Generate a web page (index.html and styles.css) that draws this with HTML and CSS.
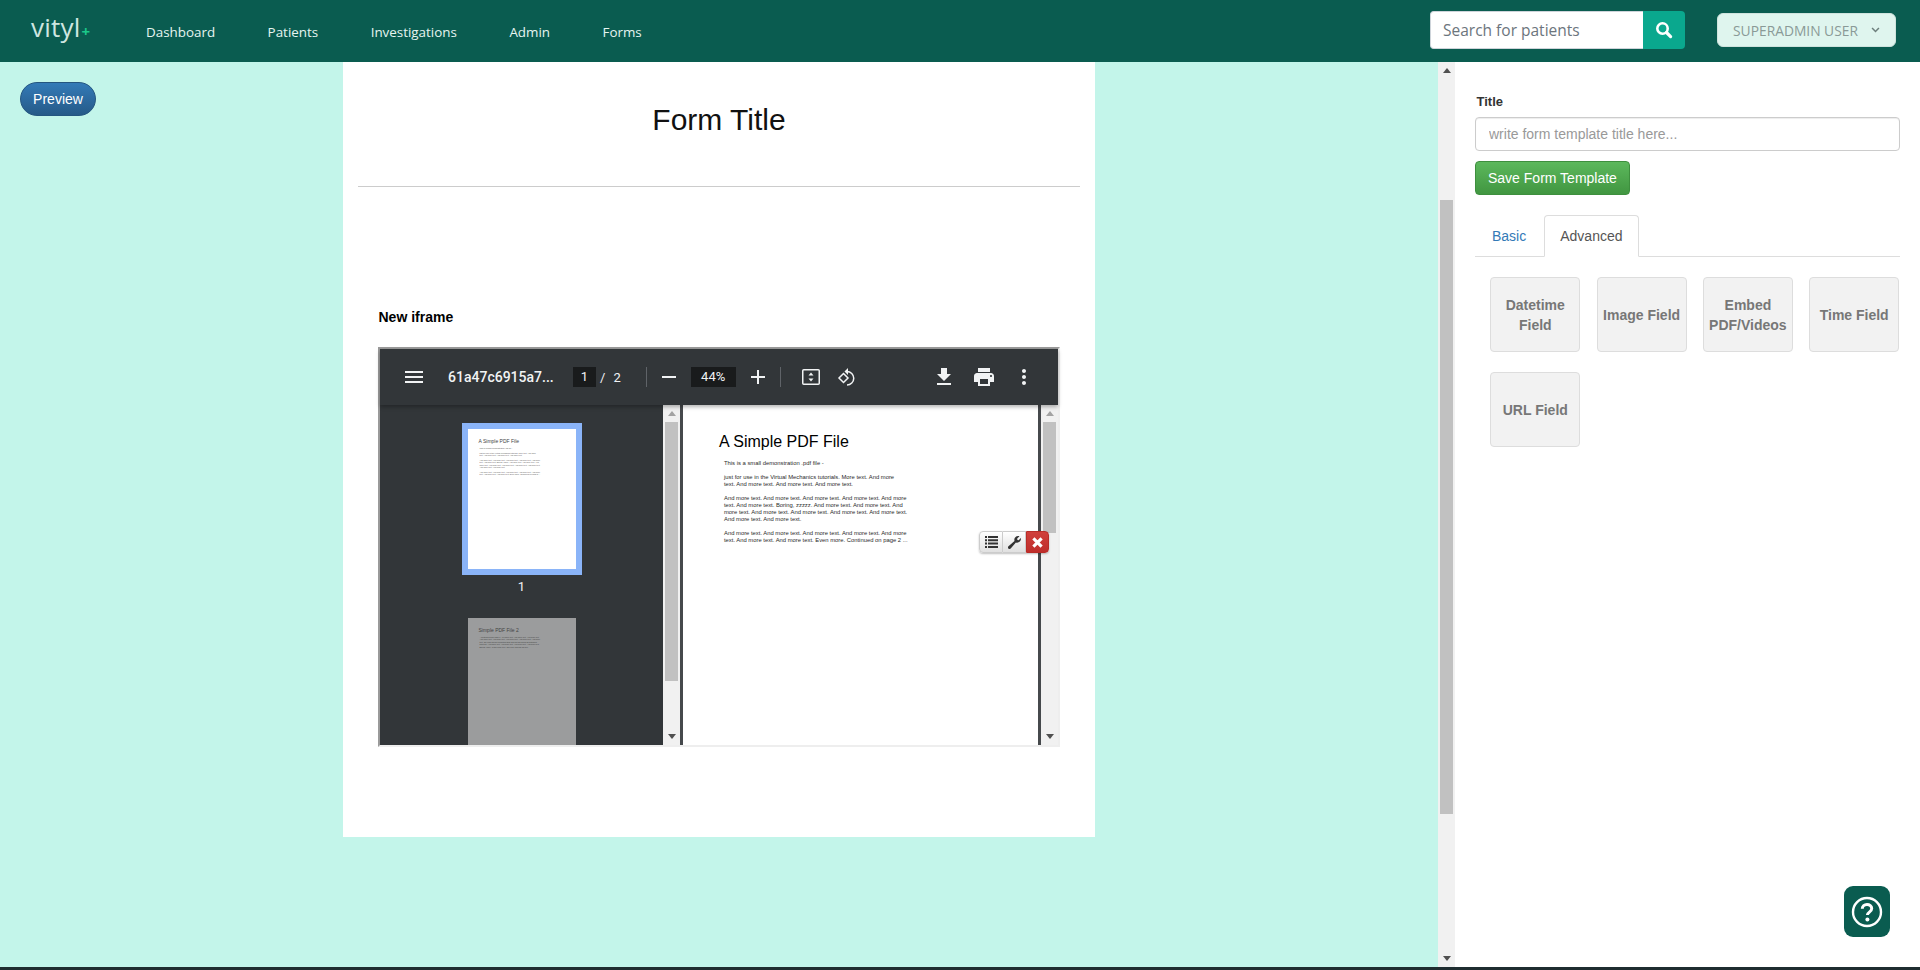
FILE: index.html
```html
<!DOCTYPE html>
<html lang="en">

<head>
    <meta charset="UTF-8">
    <title>Form Template</title>
    <link rel="stylesheet" href="styles.css">
</head>

<body>
    <header class="topbar">
        <a class="logo" href="#">vityl<span class="logo-plus">+</span></a>
        <nav class="nav">
            <a href="#">Dashboard</a>
            <a href="#">Patients</a>
            <a href="#">Investigations</a>
            <a href="#">Admin</a>
            <a href="#">Forms</a>
        </nav>
        <form class="search">
            <input class="search-input" type="text" placeholder="Search for patients">
            <button class="search-btn" type="button">
                <svg width="18" height="18" viewBox="0 0 18 18" fill="none" stroke="#fff">
                    <circle cx="7.5" cy="7.5" r="5.2" stroke-width="2.6" />
                    <path d="M11.5 11.5L15.6 15.6" stroke-width="3.2" stroke-linecap="round" />
                </svg>
            </button>
        </form>
        <button class="user-btn" type="button">
            SUPERADMIN USER
            <svg width="9" height="6" viewBox="0 0 10 7" fill="none" stroke="#6d7f7c" stroke-width="1.8">
                <path d="M1 1.2L5 5.2L9 1.2" />
            </svg>
        </button>
    </header>

    <main class="main">
        <div class="left-col">
            <button class="preview-btn" type="button">Preview</button>
        </div>

        <section class="sheet">
            <h1 class="sheet-title">Form Title</h1>
            <hr class="sheet-rule">
            <div class="field">
                <label class="field-label">New iframe</label>
                <div class="viewer">
                    <div class="viewer-bar">
                        <svg class="ico" viewBox="0 0 24 24">
                            <path d="M3 18h18v-2H3v2zm0-5h18v-2H3v2zm0-7v2h18V6H3z" />
                        </svg>
                        <span class="doc-name">61a47c6915a7...</span>
                        <span class="page-box">1</span>
                        <span class="page-sep">/</span>
                        <span class="page-total">2</span>
                        <span class="bar-sep bar-sep-first"></span>
                        <svg class="ico" viewBox="0 0 24 24">
                            <path d="M19 13H5v-2h14v2z" />
                        </svg>
                        <span class="zoom-box">44%</span>
                        <svg class="ico" viewBox="0 0 24 24">
                            <path d="M19 13h-6v6h-2v-6H5v-2h6V5h2v6h6v2z" />
                        </svg>
                        <span class="bar-sep"></span>
                        <svg class="ico ico-fit" viewBox="0 0 24 24">
                            <rect class="ico-line" x="3.750" y="4.750" width="16.500" height="14.500" rx="1" />
                            <path d="M12 7.500L14.500 10.500H9.500zM12 16.500L9.500 13.500H14.500z" />
                        </svg>
                        <svg class="ico ico-rotate" viewBox="0 0 24 24">
                            <path class="ico-line" d="M8.500 8.500L13 13L8.500 17.500L4 13z" />
                            <path class="ico-line" d="M12 6.500a6.700 6.700 0 0 1 0 13.500" />
                            <path d="M13 3L9.500 6.500L13 10z" />
                        </svg>
                        <div class="bar-right">
                            <svg class="ico" viewBox="0 0 24 24">
                                <path d="M19 9h-4V3H9v6H5l7 7 7-7zM5 18v2h14v-2H5z" />
                            </svg>
                            <svg class="ico" viewBox="0 0 24 24">
                                <path d="M19 8H5c-1.660 0-3 1.340-3 3v6h4v4h12v-4h4v-6c0-1.660-1.340-3-3-3zm-3 11H8v-5h8v5zm3-7c-.55 0-1-.45-1-1s.45-1 1-1 1 .45 1 1-.45 1-1 1zm-1-9H6v4h12V3z" />
                            </svg>
                            <svg class="ico" viewBox="0 0 24 24">
                                <path d="M12 8c1.100 0 2-.9 2-2s-.9-2-2-2-2 .9-2 2 .9 2 2 2zm0 2c-1.100 0-2 .9-2 2s.9 2 2 2 2-.9 2-2-.9-2-2-2zm0 6c-1.100 0-2 .9-2 2s.9 2 2 2 2-.9 2-2-.9-2-2-2z" />
                            </svg>
                        </div>
                    </div>
                    <div class="viewer-body">
                        <aside class="thumbs">
                            <div class="thumb thumb-active">
                                <div class="doc doc-small">
                                    <div class="doc-title">A Simple PDF File</div>
                                    <div class="doc-text">
                                        <p>This is a small demonstration .pdf file -</p>
                                        <p>just for use in the Virtual Mechanics tutorials. More text. And more<br>text. And more text. And more text. And more text.</p>
                                        <p>And more text. And more text. And more text. And more text. And more<br>text. And more text. Boring, zzzzz. And more text. And more text. And<br>more text. And more text. And more text. And more text. And more text.<br>And more text. And more text.</p>
                                        <p>And more text. And more text. And more text. And more text. And more<br>text. And more text. And more text. Even more. Continued on page 2 ...</p>
                                    </div>
                                </div>
                            </div>
                            <div class="thumb-num">1</div>
                            <div class="thumb thumb-dim">
                                <div class="doc doc-small">
                                    <div class="doc-title">Simple PDF File 2</div>
                                    <div class="doc-text">
                                        <p>...continued from page 1. Yet more text. And more text. And more text.<br>And more text. And more text. And more text. And more text. And more<br>text. Oh, how boring typing this stuff. But not as boring as watching<br>paint dry. And more text. And more text. And more text. And more text.<br>Boring. More, a little more text. The end, and just as well.</p>
                                    </div>
                                </div>
                            </div>
                        </aside>
                        <div class="scrollbar">
                            <span class="arrow-up arrow-light"></span>
                            <span class="thumb-bar thumb-bar-side"></span>
                            <span class="arrow-down"></span>
                        </div>
                        <div class="page">
                            <div class="doc">
                                <div class="doc-title">A Simple PDF File</div>
                                <div class="doc-text">
                                    <p>This is a small demonstration .pdf file -</p>
                                    <p>just for use in the Virtual Mechanics tutorials. More text. And more<br>text. And more text. And more text. And more text.</p>
                                    <p>And more text. And more text. And more text. And more text. And more<br>text. And more text. Boring, zzzzz. And more text. And more text. And<br>more text. And more text. And more text. And more text. And more text.<br>And more text. And more text.</p>
                                    <p>And more text. And more text. And more text. And more text. And more<br>text. And more text. And more text. Even more. Continued on page 2 ...</p>
                                </div>
                            </div>
                        </div>
                        <div class="scrollbar">
                            <span class="arrow-up arrow-light"></span>
                            <span class="thumb-bar thumb-bar-page"></span>
                            <span class="arrow-down"></span>
                        </div>
                    </div>
                    <div class="field-tools">
                        <button class="tool" type="button">
                            <svg width="13" height="12" viewBox="0 0 13 12" fill="#333">
                                <path d="M0 0h2v2H0zM3 0h10v2H3zM0 3.300h2v2H0zM3 3.300h10v2H3zM0 6.600h2v2H0zM3 6.600h10v2H3zM0 9.900h2v2H0zM3 9.900h10v2H3z" />
                            </svg>
                        </button>
                        <button class="tool" type="button">
                            <svg width="13" height="13" viewBox="0 0 13 13" fill="#333">
                                <path d="M13 2.800c0 2.100-1.800 3.900-3.900 3.900-.4 0-.8-.1-1.200-.2l-5.200 6c-.7.700-1.800.7-2.400 0-.6-.7-.5-1.700.2-2.300l6-5.200c-.1-.4-.2-.8-.2-1.200C6.300 1.700 8 0 10.100 0c.5 0 1 .1 1.400.3L9.200 2.600l.2 1.300 1.300.3 2.100-2.300c.1.300.2.600.2.900z" />
                            </svg>
                        </button>
                        <button class="tool tool-danger" type="button">
                            <svg width="11" height="11" viewBox="0 0 12 12" fill="none" stroke="#fff" stroke-width="3.400">
                                <path d="M1.500 1.500l9 9M10.500 1.500l-9 9" />
                            </svg>
                        </button>
                    </div>
                </div>
            </div>
        </section>

        <div class="spacer"></div>

        <div class="scrollbar scrollbar-outer">
            <span class="arrow-up"></span>
            <span class="thumb-bar thumb-bar-outer"></span>
            <span class="arrow-down"></span>
        </div>

        <aside class="panel">
            <label class="panel-label">Title</label>
            <input class="panel-input" type="text" placeholder="write form template title here...">
            <button class="save-btn" type="button">Save Form Template</button>
            <ul class="tabs">
                <li class="tab">Basic</li>
                <li class="tab tab-active">Advanced</li>
            </ul>
            <div class="field-grid">
                <div class="field-type">Datetime Field</div>
                <div class="field-type">Image Field</div>
                <div class="field-type">Embed PDF/Videos</div>
                <div class="field-type">Time Field</div>
                <div class="field-type">URL Field</div>
            </div>
            <a class="help-btn" href="#">
                <svg width="32" height="32" viewBox="0 0 32 32" fill="none" stroke="#fff">
                    <circle cx="16" cy="16" r="14" stroke-width="2.400" />
                    <path d="M11.300 12.800c0-2.700 2.100-4.300 4.700-4.300s4.700 1.600 4.700 4c0 3.600-4.300 3.500-4.300 6.500" stroke-width="3" />
                    <circle cx="16.400" cy="23.400" r="2" fill="#fff" stroke="none" />
                </svg>
            </a>
        </aside>
    </main>

    <div class="taskbar"></div>
</body>

</html>
```

FILE: styles.css
```css
* {
    margin: 0;
    padding: 0;
    box-sizing: border-box;
}

body {
    font-family: "Liberation Sans", Arial, sans-serif;
    font-size: 14px;
    width: 1920px;
    height: 970px;
    overflow: hidden;
    display: flex;
    flex-direction: column;
    background: #c3f5ea;
}

button {
    font-family: inherit;
    cursor: pointer;
}

/* top bar */
.topbar {
    height: 62px;
    background: #0a5c50;
    display: flex;
    align-items: center;
    flex-shrink: 0;
    padding-right: 24px;
}

.logo {
    font-family: "Open Sans", sans-serif;
    font-size: 26px;
    color: #cfe6e0;
    text-decoration: none;
    margin-left: 31px;
    width: 115px;
    margin-top: -8px;
    letter-spacing: 0.2px;
}

.logo-plus {
    color: #1cc88a;
    font-size: 15px;
    font-weight: 700;
    margin-left: 1px;
}

.nav {
    display: flex;
    gap: 52.500px;
    margin-top: 2px;
}

.nav a {
    font-family: "Open Sans", sans-serif;
    font-size: 13.400px;
    color: #e6f5f1;
    text-decoration: none;
}

.search {
    display: flex;
    margin-left: auto;
    height: 38px;
    margin-top: -2px;
}

.search-input {
    width: 213px;
    height: 38px;
    border: 1px solid #ced4da;
    border-right: 0;
    border-radius: 4px 0 0 4px;
    padding: 0 12px;
    font-family: "Open Sans", sans-serif;
    font-size: 15.500px;
    outline: none;
}

.search-input::placeholder {
    color: #6c757d;
}

.search-btn {
    width: 42px;
    height: 38px;
    background: #0aa88e;
    border: 0;
    border-radius: 0 4px 4px 0;
    display: flex;
    align-items: center;
    justify-content: center;
}

.user-btn {
    width: 179px;
    height: 34px;
    margin-left: 32px;
    margin-top: -2px;
    background: #dff5ee;
    border: 1px solid #cfe3dd;
    border-radius: 6px;
    font-family: "Open Sans", sans-serif;
    font-size: 13.800px;
    color: #8a9a97;
    display: flex;
    align-items: center;
    justify-content: center;
    gap: 13px;
}

/* body columns */
.main {
    flex: 1;
    display: flex;
    min-height: 0;
}

.left-col {
    width: 343px;
    padding: 20px;
}

.preview-btn {
    width: 76px;
    height: 34px;
    border: 1px solid #245580;
    border-radius: 17px;
    background: linear-gradient(#337ab7, #265a88);
    color: #fff;
    font-size: 14px;
}

.sheet {
    width: 752px;
    height: 775px;
    background: #fff;
    padding: 0 15px;
}

.sheet-title {
    font-size: 30px;
    font-weight: 400;
    line-height: 34px;
    text-align: center;
    color: #111;
    padding-top: 41px;
    height: 124px;
}

.sheet-rule {
    border: 0;
    border-top: 1px solid #ccc;
}

.field {
    padding: 122px 20px 0;
}

.field-label {
    display: block;
    font-weight: 700;
    font-size: 14px;
    color: #000;
    line-height: 16px;
    margin-bottom: 22px;
    padding-left: 0.5px;
}

.spacer {
    width: 343px;
}

/* embedded pdf viewer */
.viewer {
    position: relative;
    width: 682px;
    height: 400px;
    border: 2px solid;
    border-color: #9a9a9a #eee #eee #9a9a9a;
    display: flex;
    flex-direction: column;
    background: #323639;
}

.viewer-bar {
    height: 56px;
    flex-shrink: 0;
    display: flex;
    align-items: center;
    padding-left: 22px;
    padding-right: 22px;
    background: #323639;
    color: #f1f3f4;
    font-family: Roboto, sans-serif;
    font-size: 13px;
    box-shadow: 0 2px 4px rgba(0, 0, 0, 0.3);
    position: relative;
    z-index: 1;
}

.ico {
    width: 24px;
    height: 24px;
    fill: #f1f3f4;
    flex-shrink: 0;
}

.ico .ico-line {
    fill: none;
    stroke: #f1f3f4;
    stroke-width: 1.500;
}

.ico-fit {
    margin-left: 8px;
}

.ico-rotate {
    margin-left: 12px;
}

.doc-name {
    width: 103px;
    margin-left: 22px;
    font-weight: 500;
    font-size: 14px;
    white-space: nowrap;
}

.page-box {
    width: 23px;
    height: 20px;
    margin-left: 22px;
    background: #191b1c;
    text-align: center;
    line-height: 20px;
}

.page-sep {
    margin-left: 4px;
}

.page-total {
    margin-left: 8px;
}

.bar-sep {
    width: 1px;
    height: 20px;
    background: #5f6368;
    margin: 0 10px;
}

.bar-sep-first {
    margin-left: 25px;
}

.zoom-box {
    width: 45px;
    height: 20px;
    margin: 0 10px;
    background: #191b1c;
    text-align: center;
    line-height: 20px;
}

.bar-right {
    margin-left: auto;
    display: flex;
    gap: 16px;
}

.viewer-body {
    flex: 1;
    display: flex;
    min-height: 0;
    background: #46494c;
}

.thumbs {
    width: 283px;
    background: #323639;
    overflow: hidden;
    display: flex;
    flex-direction: column;
    align-items: center;
    padding-top: 18px;
}

.thumb {
    width: 108px;
    flex-shrink: 0;
    height: 140px;
    background: #fff;
    padding: 9px 0 0 11px;
    overflow: hidden;
}

.thumb-active {
    box-sizing: content-box;
    padding: 0;
    border: 6px solid #8ab4f8;
}

.thumb-active .doc-small {
    padding: 9px 0 0 11px;
}

.thumb-dim {
    background: #9b9c9d;
}

.thumb-num {
    flex-shrink: 0;
    color: #f1f3f4;
    font-family: Roboto, sans-serif;
    font-size: 13px;
    line-height: 16px;
    margin: 4px 0 23px;
}

.page {
    width: 355px;
    margin: 0 3px;
    background: #fff;
    padding: 28px 0 0 36px;
}

.doc {
    font-size: 5.850px;
    color: #2a2a2a;
    line-height: 7px;
}

.doc-title {
    font-size: 16px;
    line-height: 18px;
    color: #000;
    margin-bottom: 9px;
}

.doc-text {
    padding-left: 5px;
    white-space: nowrap;
}

.doc-text p {
    margin-bottom: 7px;
}

.doc-small {
    font-size: 1.950px;
    line-height: 2.400px;
    color: #555;
}

.doc-small .doc-title {
    font-size: 5px;
    line-height: 6px;
    color: #444;
    margin-bottom: 3px;
}

.doc-small .doc-text {
    padding-left: 1px;
}

.doc-small .doc-text p {
    margin-bottom: 2.400px;
}

.thumb-dim .doc-small {
    color: #3e3e3e;
}

.field-tools {
    position: absolute;
    left: 599px;
    top: 182px;
    z-index: 2;
    display: flex;
    height: 22px;
    border-radius: 4px;
    box-shadow: 0 1px 2px rgba(0, 0, 0, 0.25);
}

.tool {
    width: 23px;
    height: 22px;
    border: 1px solid #ccc;
    border-left-width: 0;
    background: linear-gradient(#fff, #e0e0e0);
    display: flex;
    align-items: center;
    justify-content: center;
}

.tool:first-child {
    width: 24px;
    border-left-width: 1px;
    border-radius: 4px 0 0 4px;
}

.tool-danger {
    border: 1px solid #b92c28;
    border-radius: 0 4px 4px 0;
    background: linear-gradient(#d0403c, #bf2e2b);
}

/* scrollbars */
.scrollbar {
    width: 17px;
    flex-shrink: 0;
    background: #f1f1f1;
    display: flex;
    flex-direction: column;
    align-items: center;
    position: relative;
}

.arrow-up,
.arrow-down {
    width: 0;
    height: 0;
    border-left: 4.500px solid transparent;
    border-right: 4.500px solid transparent;
    position: absolute;
}

.arrow-up {
    top: 6px;
    border-bottom: 5px solid #505050;
}

.arrow-light {
    border-bottom-color: #a3a3a3;
}

.arrow-down {
    bottom: 6px;
    border-top: 5px solid #505050;
}

.thumb-bar {
    width: 13px;
    background: #c1c1c1;
}

.thumb-bar-side {
    height: 259px;
    margin-top: 17px;
}

.thumb-bar-page {
    height: 111px;
    margin-top: 17px;
}

.thumb-bar-outer {
    height: 614px;
    margin-top: 138px;
}

/* right panel */
.panel {
    flex: 1;
    position: relative;
    background: #fff;
    padding: 32px 20px 0;
    color: #333;
}

.panel-label {
    display: block;
    font-weight: 700;
    font-size: 13px;
    line-height: 16px;
    margin-bottom: 7px;
    padding-left: 1.500px;
    height: 16px;
}

.panel-input {
    display: block;
    width: 100%;
    height: 34px;
    padding: 6px 13px;
    border: 1px solid #ccc;
    border-radius: 4px;
    font-family: inherit;
    font-size: 14px;
    outline: none;
    box-shadow: inset 0 1px 1px rgba(0, 0, 0, 0.075);
}

.panel-input::placeholder {
    color: #999;
}

.save-btn {
    display: block;
    height: 34px;
    margin-top: 10px;
    padding: 6px 12px;
    border: 1px solid #3e8f3e;
    border-radius: 4px;
    background: linear-gradient(#5cb85c, #419641);
    color: #fff;
    font-size: 14px;
}

.tabs {
    list-style: none;
    display: flex;
    gap: 2px;
    height: 42px;
    margin-top: 20px;
    padding-left: 1px;
    border-bottom: 1px solid #ddd;
}

.tab {
    height: 42px;
    padding: 10px 15px;
    line-height: 20px;
    color: #337ab7;
    border: 1px solid transparent;
    border-radius: 4px 4px 0 0;
}

.tab-active {
    color: #555;
    background: #fff;
    border-color: #ddd #ddd #fff;
}

.field-grid {
    display: grid;
    grid-template-columns: repeat(4, 90px);
    column-gap: 16.300px;
    row-gap: 20px;
    padding: 20px 0 0 15.300px;
}

.field-type {
    height: 75px;
    padding: 0 4px;
    display: flex;
    align-items: center;
    justify-content: center;
    text-align: center;
    font-weight: 700;
    line-height: 20px;
    color: #777;
    background: #f2f2f2;
    border: 1px solid #ddd;
    border-radius: 4px;
}

.help-btn {
    position: absolute;
    left: 389px;
    top: 824px;
    width: 46px;
    height: 51px;
    border-radius: 9px;
    background: #0a5c50;
    display: flex;
    align-items: center;
    justify-content: center;
}

.taskbar {
    height: 3px;
    flex-shrink: 0;
    background: #1f2d30;
}
```
